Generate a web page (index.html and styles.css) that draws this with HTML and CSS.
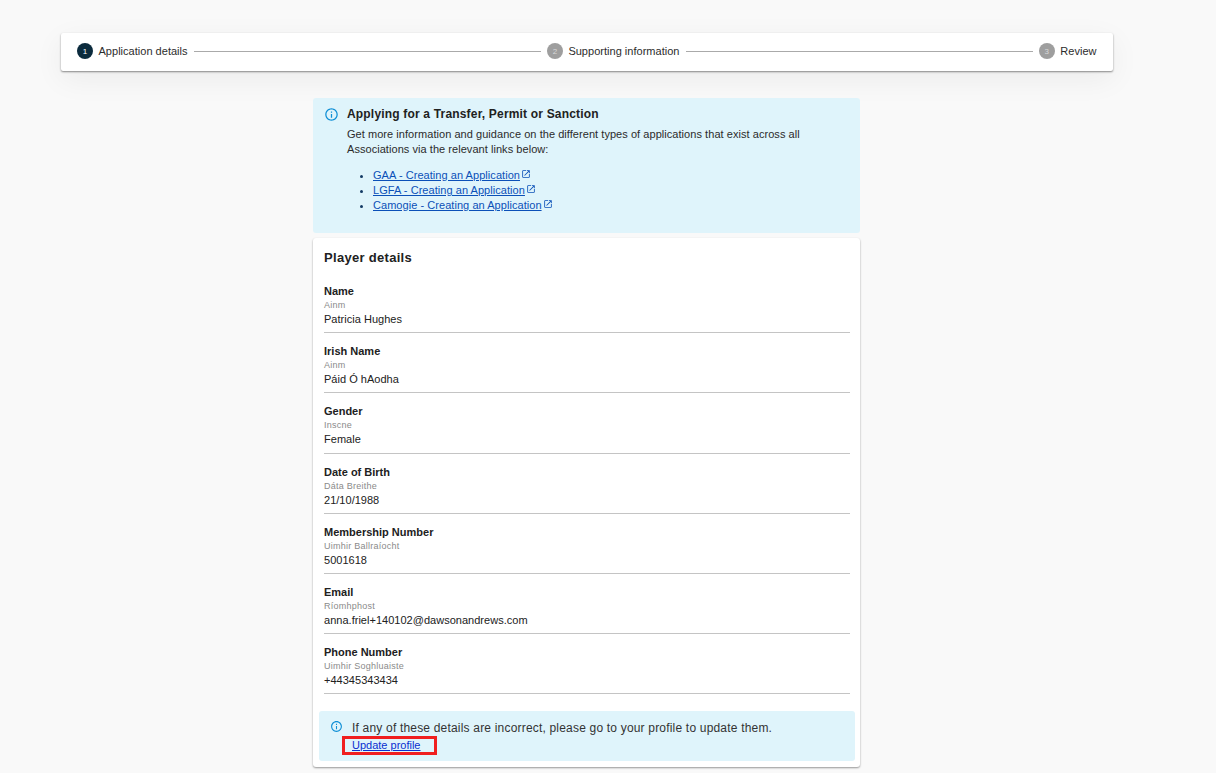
FILE: index.html
```html
<!DOCTYPE html>
<html lang="en">
<head>
<meta charset="utf-8">
<title>Application details</title>
<link rel="stylesheet" href="styles.css">
</head>
<body>
<div class="page">
  <nav class="stepper">
    <div class="step"><span class="dot dot-active">1</span><span class="step-label">Application details</span></div>
    <div class="line"></div>
    <div class="step"><span class="dot">2</span><span class="step-label">Supporting information</span></div>
    <div class="line"></div>
    <div class="step"><span class="dot">3</span><span class="step-label">Review</span></div>
  </nav>
  <main class="content">
    <section class="alert alert-top">
      <svg class="info" viewBox="0 0 24 24"><path d="M11 7h2v2h-2zm0 4h2v6h-2zm1-9C6.48 2 2 6.48 2 12s4.48 10 10 10 10-4.48 10-10S17.52 2 12 2zm0 18c-4.41 0-8-3.59-8-8s3.59-8 8-8 8 3.59 8 8-3.59 8-8 8z"/></svg>
      <div class="alert-body">
        <h2 class="alert-title">Applying for a Transfer, Permit or Sanction</h2>
        <p class="alert-text">Get more information and guidance on the different types of applications that exist across all Associations via the relevant links below:</p>
        <ul class="links">
          <li><a href="#">GAA - Creating an Application</a><svg class="ext" viewBox="0 0 24 24"><path d="M19 19H5V5h7V3H5c-1.11 0-2 .9-2 2v14c0 1.1.89 2 2 2h14c1.1 0 2-.9 2-2v-7h-2v7zM14 3v2h3.59l-9.83 9.83 1.41 1.41L19 6.41V10h2V3h-7z"/></svg></li>
          <li><a href="#">LGFA - Creating an Application</a><svg class="ext" viewBox="0 0 24 24"><path d="M19 19H5V5h7V3H5c-1.11 0-2 .9-2 2v14c0 1.1.89 2 2 2h14c1.1 0 2-.9 2-2v-7h-2v7zM14 3v2h3.59l-9.83 9.83 1.41 1.41L19 6.41V10h2V3h-7z"/></svg></li>
          <li><a href="#">Camogie - Creating an Application</a><svg class="ext" viewBox="0 0 24 24"><path d="M19 19H5V5h7V3H5c-1.11 0-2 .9-2 2v14c0 1.1.89 2 2 2h14c1.1 0 2-.9 2-2v-7h-2v7zM14 3v2h3.59l-9.83 9.83 1.41 1.41L19 6.41V10h2V3h-7z"/></svg></li>
        </ul>
      </div>
    </section>
    <section class="card">
      <h2 class="card-title">Player details</h2>
      <dl class="fields">
        <div class="field"><dt>Name</dt><dd class="irish">Ainm</dd><dd class="value">Patricia Hughes</dd></div>
        <div class="field"><dt>Irish Name</dt><dd class="irish">Ainm</dd><dd class="value">Páid Ó hAodha</dd></div>
        <div class="field"><dt>Gender</dt><dd class="irish">Inscne</dd><dd class="value">Female</dd></div>
        <div class="field"><dt>Date of Birth</dt><dd class="irish">Dáta Breithe</dd><dd class="value">21/10/1988</dd></div>
        <div class="field"><dt>Membership Number</dt><dd class="irish">Uimhir Ballraíocht</dd><dd class="value">5001618</dd></div>
        <div class="field"><dt>Email</dt><dd class="irish">Ríomhphost</dd><dd class="value">anna.friel+140102@dawsonandrews.com</dd></div>
        <div class="field"><dt>Phone Number</dt><dd class="irish">Uimhir Soghluaiste</dd><dd class="value">+44345343434</dd></div>
      </dl>
      <div class="alert alert-inner">
        <svg class="info" viewBox="0 0 24 24"><path d="M11 7h2v2h-2zm0 4h2v6h-2zm1-9C6.48 2 2 6.48 2 12s4.48 10 10 10 10-4.48 10-10S17.52 2 12 2zm0 18c-4.41 0-8-3.59-8-8s3.59-8 8-8 8 3.59 8 8-3.59 8-8 8z"/></svg>
        <div class="inner-body">
          <p class="inner-text">If any of these details are incorrect, please go to your profile to update them.</p>
          <a class="update" href="#">Update profile</a>
        </div>
      </div>
    </section>
  </main>
</div>
</body>
</html>
```
FILE: styles.css
```css
* { box-sizing: border-box; }
html, body { margin: 0; height: 773px; overflow: hidden; }
body {
  background: #f9f9f9;
  color: #212121;
  font-family: "Liberation Sans", Arial, sans-serif;
  font-size: 11px;
}
.page {
  width: 1174px;
  padding: 33px 0 0 61px;
}
.stepper {
  width: 1052px;
  height: 38px;
  background: #fff;
  display: flex;
  align-items: center;
  padding: 0 16.5px 2px 16px;
  border-radius: 2px;
  box-shadow: 0 1px 2px rgba(0,0,0,.45), 0 8px 30px rgba(0,0,0,.06);
}
.step { display: flex; align-items: center; }
.dot {
  width: 16px;
  height: 16px;
  border-radius: 50%;
  background: #9e9e9e;
  color: #d8d8d8;
  font-size: 8px;
  display: flex;
  align-items: center;
  justify-content: center;
  margin-right: 5.5px;
}
.dot-active { background: #0b2b3d; color: #fff; }
.step-label { font-size: 11px; letter-spacing: .02px; color: #2c2c2c; }
.line { flex: 1; height: 1px; background: #aaa; margin: 0 6px; }
.content {
  width: 547px;
  margin: 27px 0 0 252px;
}
.alert { background: #dff4fb; border-radius: 3px; display: flex; }
.info { fill: #0f8fd6; flex: none; }
.alert-top { height: 135px; padding: 9px 11px; }
.alert-top .info { width: 15px; height: 15px; }
.alert-body { margin-left: 8px; }
.alert-title {
  margin: 0;
  font-size: 12px;
  font-weight: 700;
  line-height: 15px;
  letter-spacing: .18px;
}
.alert-text {
  margin: 5px 0 0;
  font-size: 11px;
  line-height: 15px;
  letter-spacing: .05px;
  color: #2b2b2b;
}
.links {
  margin: 11px 0 0;
  padding: 0 0 0 26px;
  line-height: 15px;
  letter-spacing: .05px;
  color: #123a63;
}
.links a { color: #0b50b8; }
.ext { width: 10px; height: 10px; fill: #0b50b8; margin-left: 1px; vertical-align: 0; }
.card {
  margin-top: 5px;
  height: 529px;
  background: #fff;
  border-radius: 3px;
  padding: 12px 5px 0 6px;
  box-shadow: 0 1px 2px rgba(0,0,0,.4);
}
.card-title {
  margin: 0 5px;
  font-size: 13px;
  line-height: 16px;
  font-weight: 700;
  letter-spacing: .3px;
}
.fields { margin: 18px 5px 0; }
.field {
  height: 60.2px;
  padding-top: 11px;
  border-bottom: 1px solid #c4c4c4;
}
.field:first-child { height: 49.2px; padding-top: 0; }
.field dt { font-size: 11px; line-height: 14px; font-weight: 700; letter-spacing: 0; }
.field dd { margin: 0; }
.irish { font-size: 9px; line-height: 14px; color: #8a8a8a; letter-spacing: .25px; }
.value { font-size: 11px; line-height: 15px; letter-spacing: .02px; }
.alert-inner { margin-top: 16.4px; height: 50px; padding: 9px 11px; }
.alert-inner .info { width: 13px; height: 13px; }
.inner-body { margin-left: 9px; }
.inner-text { margin: 0; font-size: 12px; line-height: 16px; letter-spacing: .19px; color: #333; }
.update {
  margin: 3px 0 0 -7px;
  font-size: 11px;
  line-height: 13px;
  color: #0a2fd0;
  display: inline-block;
  outline: 3px solid #f01f1f;
  padding: 0 13px 0 7px;
  letter-spacing: 0;
}
```
